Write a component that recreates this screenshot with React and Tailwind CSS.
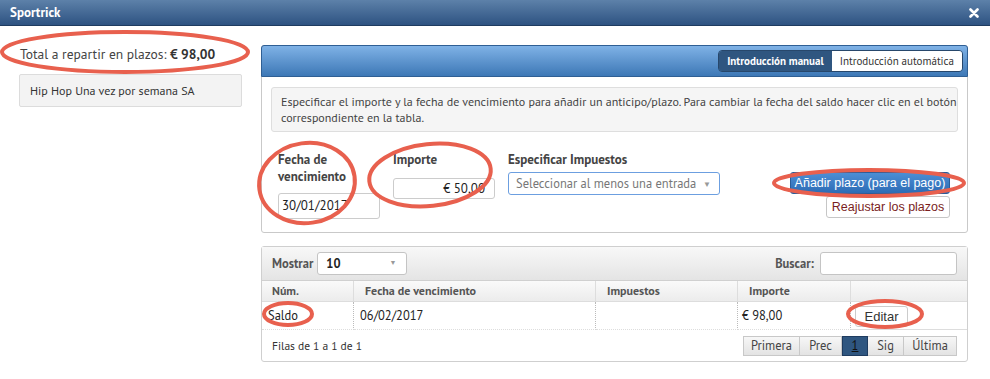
import React from 'react';

const font = { fontFamily: '"PT Sans", Lato, "Open Sans", sans-serif' };
const arial = { fontFamily: '"Liberation Sans", Arial, sans-serif' };

function Annotations() {
  // red hand-drawn ellipses over the screenshot
  return (
    <svg className="absolute inset-0 pointer-events-none" width="990" height="379">
      <g fill="none" stroke="#e8604e" strokeWidth="4">
        <ellipse cx="125" cy="52" rx="123" ry="20" />
        <ellipse cx="307" cy="183" rx="48" ry="40" transform="rotate(-8 307 183)" />
        <ellipse cx="430" cy="175" rx="61" ry="31" transform="rotate(-6 430 175)" />
        <ellipse cx="869" cy="183" rx="95" ry="13" />
        <ellipse cx="288" cy="314" rx="24" ry="11" />
        <ellipse cx="885" cy="314" rx="37" ry="13" />
      </g>
    </svg>
  );
}

export default function App() {
  return (
    <div className="relative w-[990px] h-[379px] bg-white overflow-hidden text-[#333]" style={font}>
      {/* Title bar */}
      <div className="h-[26px] flex items-center justify-between px-[10px] bg-gradient-to-b from-[#5d81a9] to-[#2e5382] border-b border-[#1f3c60]">
        <span className="text-white font-bold text-[13px]">Sportrick</span>
        <svg width="10" height="10" viewBox="0 0 10 10" className="mr-[1px]">
          <path d="M1.5 1.5 L8.5 8.5 M8.5 1.5 L1.5 8.5" stroke="#fff" strokeWidth="2.6" strokeLinecap="round" />
        </svg>
      </div>

      <div className="flex pt-[19px]">
        {/* Left column */}
        <div className="w-[261px] shrink-0 pl-[20px]">
          <div className="text-[13.5px] leading-[18px] text-[#444]">
            Total a repartir en plazos: <b className="text-[#333]">€ 98,00</b>
          </div>
          <div className="mt-[11px] w-[223px] h-[33px] ml-[-1px] flex items-center px-[10px] text-[12px] bg-[#f3f3f3] border border-[#dcdcdc] rounded-[2px]">
            Hip Hop Una vez por semana SA
          </div>
        </div>

        {/* Right column */}
        <div className="w-[707px] shrink-0">
          {/* Form panel */}
          <div className="border border-[#c9c9c9] rounded-[3px]">
            <div className="h-[32px] flex items-center justify-end pr-[4px] bg-gradient-to-b from-[#7fb2e6] to-[#3d78b6] border border-[#2f5f94] rounded-t-[3px] -m-px mb-0">
              <div className="flex h-[22px] text-[11px] rounded-[4px] border border-[#27476b] overflow-hidden">
                <div className="px-[8px] flex items-center bg-[#2f5680] text-white font-bold">Introducción manual</div>
                <div className="px-[8px] flex items-center bg-white text-[#333]">Introducción automática</div>
              </div>
            </div>
            <div className="px-[9px] pt-[10px] pb-[13px]">
              <div className="bg-[#f5f5f5] border border-[#dedede] rounded-[3px] pl-[9px] pr-0 pt-[6px] pb-[5px] text-[12px] leading-[16px] text-[#444]">
                Especificar el importe y la fecha de vencimiento para añadir un anticipo/plazo. Para cambiar la fecha del saldo hacer clic en el botón correspondiente en la tabla.
              </div>
              <div className="flex mt-[19px] pl-[7px]">
                <div className="w-[115px]">
                  <div className="font-bold text-[13px] leading-[17px] text-[#444]">Fecha de<br />vencimiento</div>
                  <div className="mt-[8px] w-[102px] h-[26px] border border-[#ccc] rounded-[3px] flex items-center px-[3px] text-[13px] text-[#222]">30/01/2017</div>
                </div>
                <div className="w-[115px]">
                  <div className="font-bold text-[13px] leading-[17px] text-[#444]">Importe</div>
                  <div className="mt-[10px] w-[102px] h-[21px] border border-[#ccc] rounded-[3px] flex items-center justify-end pr-[9px] text-[13px] text-[#222]">€ 50,00</div>
                </div>
                <div className="w-[212px]">
                  <div className="font-bold text-[13px] leading-[17px] text-[#444]">Especificar Impuestos</div>
                  <div className="mt-[4px] w-[212px] h-[23px] border border-[#6c9fe0] rounded-[3px] flex items-center justify-between pl-[7px] pr-[8px] text-[12.5px] text-[#777]">
                    <span>Seleccionar al menos una entrada</span>
                    <span className="text-[8px] text-[#999]">▼</span>
                  </div>
                </div>
                <div className="flex-1 flex flex-col items-end pt-[21px] pr-[8px]" style={arial}>
                  <div className="h-[22px] w-[160px] flex items-center justify-center bg-gradient-to-b from-[#4c8ed5] to-[#2d6cb5] border border-[#2a5c99] rounded-[3px] text-white text-[12.5px]">Añadir plazo (para el pago)</div>
                  <div className="mt-[2px] h-[22px] w-[124px] flex items-center justify-center bg-white border border-[#c6c6c6] rounded-[3px] text-[#7a1e1e] text-[12.5px]">Reajustar los plazos</div>
                </div>
              </div>
            </div>
          </div>

          {/* Table panel */}
          <div className="mt-[13px] border border-[#cfcfcf] rounded-[3px] text-[12.5px]">
            <div className="h-[34px] flex items-center justify-between px-[10px] bg-gradient-to-b from-[#f8f8f8] to-[#e4e4e4] border-b border-[#d0d0d0]">
              <div className="flex items-center">
                <span className="font-bold text-[#555]">Mostrar</span>
                <div className="ml-[4px] w-[90px] h-[23px] bg-white border border-[#c4c4c4] rounded-[3px] flex items-center justify-between pl-[8px] pr-[10px]">
                  <span className="font-bold text-[#222]">10</span>
                  <span className="text-[7px] text-[#999]">▼</span>
                </div>
              </div>
              <div className="flex items-center">
                <span className="font-bold text-[#555] mr-[6px]">Buscar:</span>
                <div className="w-[137px] h-[23px] bg-white border border-[#c4c4c4] rounded-[3px]"></div>
              </div>
            </div>
            <div className="grid grid-cols-[92px_242px_142px_113px_1fr]">
              <div className="h-[21px] flex items-center pl-[10px] font-bold text-[12px] text-[#555] bg-gradient-to-b from-[#fafafa] to-[#ececec] border-r border-[#ddd] border-b">Núm.</div>
              <div className="h-[21px] flex items-center pl-[11px] font-bold text-[12px] text-[#555] bg-gradient-to-b from-[#fafafa] to-[#ececec] border-r border-[#ddd] border-b">Fecha de vencimiento</div>
              <div className="h-[21px] flex items-center pl-[11px] font-bold text-[12px] text-[#555] bg-gradient-to-b from-[#fafafa] to-[#ececec] border-r border-[#ddd] border-b">Impuestos</div>
              <div className="h-[21px] flex items-center pl-[11px] font-bold text-[12px] text-[#555] bg-gradient-to-b from-[#fafafa] to-[#ececec] border-r border-[#ddd] border-b">Importe</div>
              <div className="h-[21px] bg-gradient-to-b from-[#fafafa] to-[#ececec] border-b border-[#ddd]"></div>

              <div className="h-[28px] flex items-center pl-[6px] border-r border-r-[#bbb] border-dotted border-b border-b-[#ddd] text-[#222]">Saldo</div>
              <div className="h-[28px] flex items-center pl-[6px] border-r border-r-[#bbb] border-dotted border-b border-b-[#ddd] text-[#222]">06/02/2017</div>
              <div className="h-[28px] flex items-center border-r border-r-[#bbb] border-dotted border-b border-b-[#ddd]"></div>
              <div className="h-[28px] flex items-center pl-[4px] border-r border-r-[#bbb] border-dotted border-b border-b-[#ddd] text-[#222]">€ 98,00</div>
              <div className="h-[28px] flex items-center pl-[4px] border-b border-[#ddd]">
                <div className="w-[53px] h-[21px] mt-[2px] border border-[#ccc] rounded-[3px] bg-white flex items-center justify-center text-[13px] text-[#333]" style={arial}>Editar</div>
              </div>
            </div>
            <div className="h-[31px] flex items-center justify-between pl-[10px] pr-[10px]">
              <span className="text-[11.5px] text-[#333]">Filas de 1 a 1 de 1</span>
              <div className="flex h-[20px] text-[12.5px] text-[#444]">
                <div className="w-[57px] flex items-center justify-center bg-gradient-to-b from-[#f7f7f7] to-[#e3e3e3] border border-[#c8c8c8]">Primera</div>
                <div className="w-[42px] flex items-center justify-center bg-gradient-to-b from-[#f7f7f7] to-[#e3e3e3] border border-[#c8c8c8] border-l-0">Prec</div>
                <div className="w-[26px] flex items-center justify-center bg-[#2f5680] border border-[#1f3c60] text-[#111] underline">1</div>
                <div className="w-[36px] flex items-center justify-center bg-gradient-to-b from-[#f7f7f7] to-[#e3e3e3] border border-[#c8c8c8] border-l-0">Sig</div>
                <div className="w-[53px] flex items-center justify-center bg-gradient-to-b from-[#f7f7f7] to-[#e3e3e3] border border-[#c8c8c8] border-l-0">Última</div>
              </div>
            </div>
          </div>
        </div>
      </div>

      <Annotations />
    </div>
  );
}
